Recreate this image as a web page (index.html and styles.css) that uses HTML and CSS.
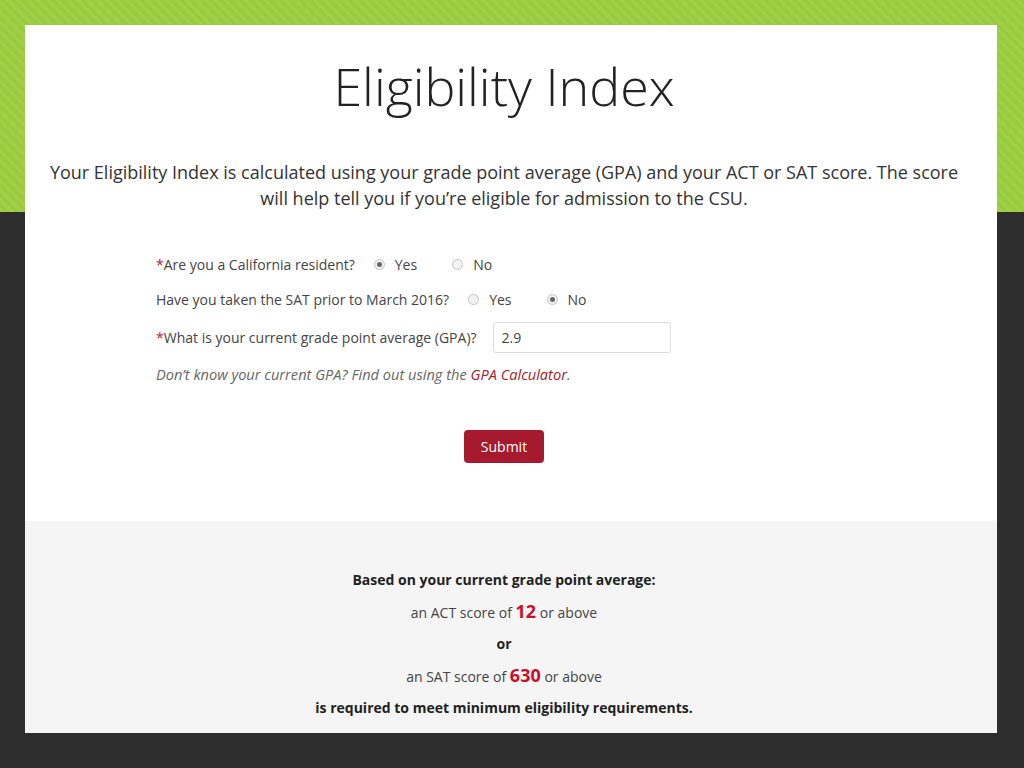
FILE: index.html
```html
<!DOCTYPE html>
<html>
	<head>
		<meta charset="UTF-8">
		<title>Eligibility Index</title>
		<link rel="stylesheet" href="styles.css">
	</head>
	<body>
		<div class="card">
			<section class="calc">
				<h1>Eligibility Index</h1>
				<p class="intro">Your Eligibility Index is calculated using your grade point average (GPA) and your ACT or SAT score. The score will help tell you if you’re eligible for admission to the CSU.</p>

				<form class="form">
					<div class="row r1">
						<span class="label"><span class="req">*</span>Are you a California resident?</span>
						<label class="radio"><span class="dot on"></span>Yes</label>
						<label class="radio"><span class="dot"></span>No</label>
					</div>
					<div class="row r2">
						<span class="label">Have you taken the SAT prior to March 2016?</span>
						<label class="radio"><span class="dot"></span>Yes</label>
						<label class="radio"><span class="dot on"></span>No</label>
					</div>
					<div class="row r3">
						<span class="label"><span class="req">*</span>What is your current grade point average (GPA)?</span>
						<input class="gpa" type="text" value="2.9">
					</div>
					<p class="hint">Don’t know your current GPA? Find out using the <a href="#">GPA Calculator</a>.</p>
					<div class="actions">
						<button class="submit" type="button">Submit</button>
					</div>
				</form>
			</section>

			<section class="result">
				<p class="strong">Based on your current grade point average:</p>
				<p class="score">an ACT score of <b>12</b> or above</p>
				<p class="strong">or</p>
				<p class="score">an SAT score of <b>630</b> or above</p>
				<p class="strong">is required to meet minimum eligibility requirements.</p>
			</section>
		</div>
	</body>
</html>
```

FILE: styles.css
```css
* {
	box-sizing: border-box;
	font-family: "Open Sans", "Liberation Sans", sans-serif;
}
html, body {
	margin: 0;
	padding: 0;
	height: 100%;
}
body {
	background:
		repeating-linear-gradient(45deg, rgba(255,255,255,0.07) 0 3px, transparent 3px 7px) 0 0 / 100% 212px no-repeat,
		linear-gradient(#9acb3c, #9acb3c) 0 0 / 100% 212px no-repeat,
		#2d2d2d;
	padding: 25px 27px 0 25px;
}

.card {
	background: #fff;
	width: 972px;
	height: 708px;
	display: flex;
	flex-direction: column;
}

.calc {
	height: 496px;
	padding: 30px 14px 0 0;
}
h1 {
	color: #222;
	font-size: 52px;
	font-weight: 300;
	line-height: 62px;
	margin: 0;
	text-align: center;
}
.intro {
	color: #333;
	font-size: 18px;
	line-height: 26px;
	margin: 42px 0 0;
	padding: 0 14px;
	text-align: center;
}

.form {
	margin: 43px 0 0 131px;
	font-size: 14px;
	color: #444;
}
.row {
	display: flex;
	align-items: center;
	height: 20px;
}
.r2 { margin-top: 15px; }
.r3 {
	height: 31px;
	margin-top: 13px;
}
.label { margin-right: 19px; }
.req { color: #c8102e; }
.radio {
	display: flex;
	align-items: center;
	margin-right: 35px;
}
.dot {
	width: 11px;
	height: 11px;
	border: 1px solid #c4c4c4;
	border-radius: 50%;
	background: #f2f2f2;
	margin-right: 10px;
	display: flex;
	align-items: center;
	justify-content: center;
}
.dot.on::after {
	content: "";
	width: 5px;
	height: 5px;
	border-radius: 50%;
	background: #666;
}
.gpa {
	width: 178px;
	height: 31px;
	border: 1px solid #ddd;
	border-radius: 3px;
	padding: 0 8px;
	font-size: 14px;
	color: #444;
	margin-left: -3px;
}
.hint {
	color: #666;
	font-size: 14.6px;
	font-style: italic;
	line-height: 20px;
	margin: 11px 0 0;
}
.hint a {
	color: #a6192e;
	text-decoration: none;
}
.actions {
	margin: 46px 0 0 -131px;
	display: flex;
	justify-content: center;
}
.submit {
	background: #a6192e;
	border: 0;
	border-radius: 4px;
	color: #fff;
	font-size: 14px;
	height: 33px;
	width: 80px;
	padding: 0;
}

.result {
	flex: 1;
	background: #f5f5f5;
	padding: 46px 14px 0 0;
	text-align: center;
	font-size: 14px;
	color: #444;
}
.result p {
	margin: 0;
	line-height: 26px;
}
.result .strong {
	color: #222;
	font-weight: 700;
}
.result .score {
	line-height: 36px;
}
.score b {
	color: #c8102e;
	font-size: 18px;
	font-weight: 700;
}
```
